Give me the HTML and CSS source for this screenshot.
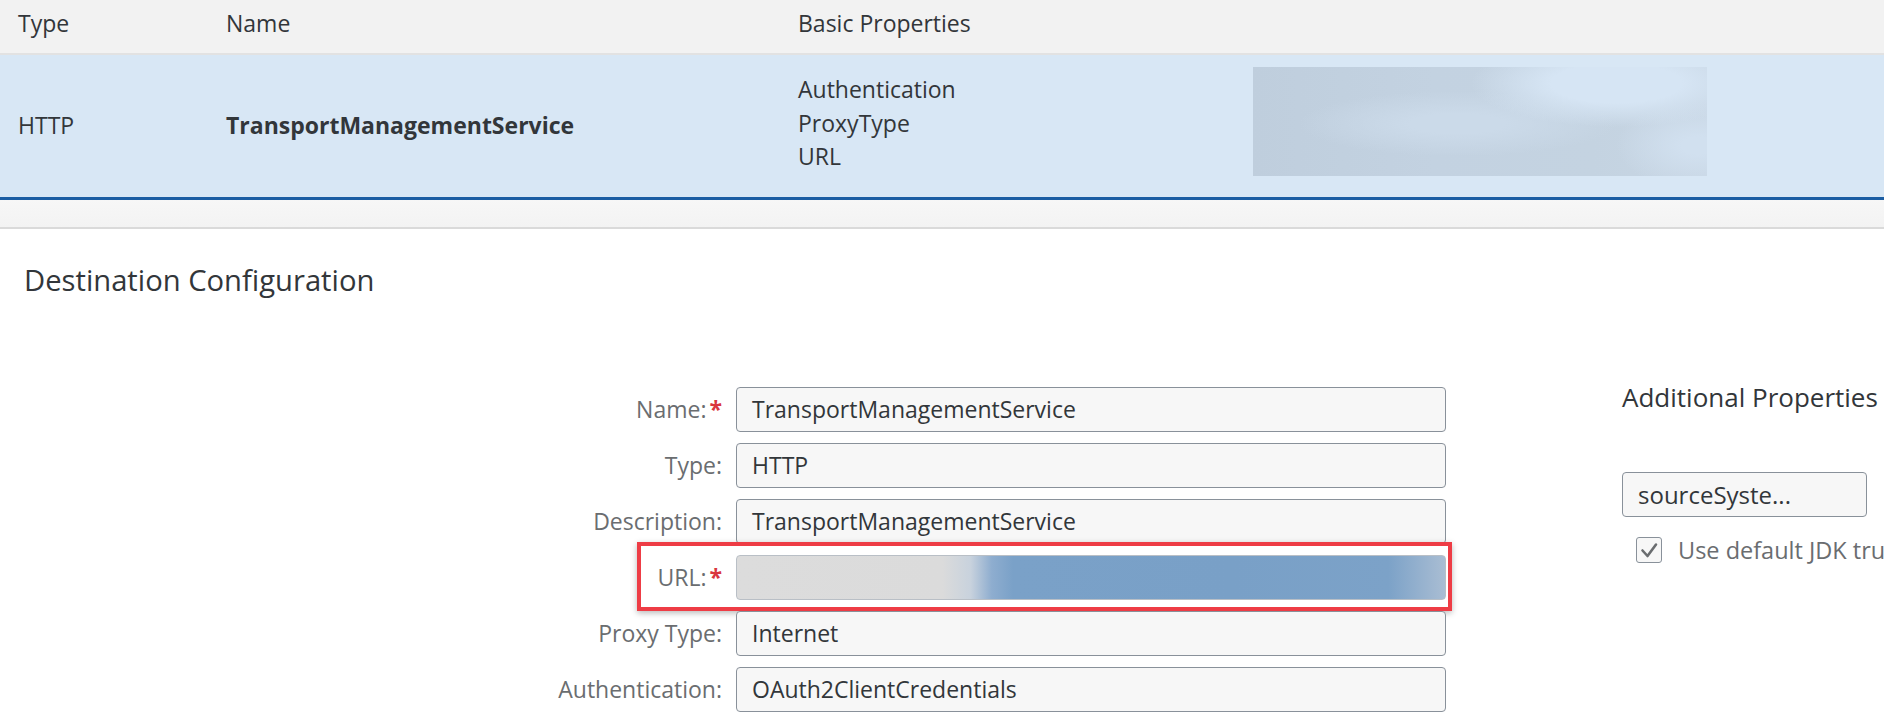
FILE: index.html
```html
<!DOCTYPE html>
<html lang="en">
<head>
<meta charset="utf-8">
<title>Destination Configuration</title>
<link rel="stylesheet" href="styles.css">
</head>
<body>
<div class="page">
  <div class="table">
    <div class="thead">
      <div class="cell">Type</div>
      <div class="cell">Name</div>
      <div class="cell">Basic Properties</div>
      <div class="cell"></div>
    </div>
    <div class="trow">
      <div class="cell">HTTP</div>
      <div class="cell bold">TransportManagementService</div>
      <div class="cell props">
        <div>Authentication</div>
        <div>ProxyType</div>
        <div>URL</div>
      </div>
      <div class="cell blurcell"><div class="blurbox"></div></div>
    </div>
    <div class="tfoot"></div>
  </div>

  <div class="section">
    <h2 class="title">Destination Configuration</h2>
    <div class="form">
      <div class="fields">
        <div class="field">
          <label class="label">Name:<span class="req">*</span></label>
          <div class="input">TransportManagementService</div>
        </div>
        <div class="field">
          <label class="label">Type:</label>
          <div class="input">HTTP</div>
        </div>
        <div class="field">
          <label class="label">Description:</label>
          <div class="input">TransportManagementService</div>
        </div>
        <div class="field field-url">
          <label class="label">URL:<span class="req">*</span></label>
          <div class="input input-blur"></div>
          <div class="highlight"></div>
        </div>
        <div class="field">
          <label class="label">Proxy Type:</label>
          <div class="input">Internet</div>
        </div>
        <div class="field">
          <label class="label">Authentication:</label>
          <div class="input">OAuth2ClientCredentials</div>
        </div>
      </div>
      <div class="additional">
        <h3 class="subtitle">Additional Properties</h3>
        <div class="input small">sourceSyste...</div>
        <div class="check-row">
          <span class="checkbox">
            <svg width="26" height="26" viewBox="0 0 26 26"><polyline points="6.5,13.5 11.5,19 20,7.5" fill="none" stroke="#6a6d70" stroke-width="2.6" stroke-linecap="round" stroke-linejoin="round"/></svg>
          </span>
          <span class="check-label">Use default JDK truststore</span>
        </div>
      </div>
    </div>
  </div>
</div>
</body>
</html>
```
FILE: styles.css
```css
html, body {
  margin: 0;
  padding: 0;
  overflow: hidden;
  background: #ffffff;
}

.page {
  width: 1884px;
  height: 726px;
  overflow: hidden;
  font-family: "Open Sans", "Liberation Sans", sans-serif;
  color: #32363a;
}

/* ---------- table ---------- */
.thead,
.trow {
  display: grid;
  grid-template-columns: 208px 572px 455px 1fr;
  padding-left: 18px;
  font-size: 23px;
}

.thead {
  background: #f2f2f2;
  border-bottom: 2px solid #e2e2e2;
  line-height: 32px;
  padding-top: 7px;
  height: 46px;
}

.trow {
  height: 142px;
  background: #d8e7f5;
  border-bottom: 3px solid #1b5da3;
  align-items: center;
  line-height: 33.8px;
}

.props {
  margin-bottom: 5px;
}

.bold {
  font-weight: 700;
}

.blurcell {
  align-self: start;
  margin-top: 12px;
}

.blurbox {
  width: 454px;
  height: 109px;
  background:
    radial-gradient(ellipse 32% 40% at 80% 15%, #d6e5f4 45%, rgba(214,229,244,0) 100%),
    radial-gradient(ellipse 35% 30% at 45% 52%, #cbdae9 30%, rgba(203,218,233,0) 100%),
    radial-gradient(ellipse 18% 40% at 98% 72%, #d1e0ef 20%, rgba(209,224,239,0) 100%),
    linear-gradient(90deg, #bfcedd 0%, #c3d2e1 40%, #c4d3e1 75%, #c8d6e4 100%);
}

.tfoot {
  height: 27px;
  background: linear-gradient(#f7f7f7, #f3f3f3);
  border-bottom: 2px solid #dadada;
}

/* ---------- section ---------- */
.section {
  padding-top: 32px;
}

.title {
  margin: 0 0 0 24px;
  font-size: 29.2px;
  font-weight: 400;
  line-height: 38px;
  color: #32363a;
}

.form {
  display: flex;
  align-items: flex-start;
  margin-top: 81px;
}

.fields {
  display: flex;
  flex-direction: column;
  gap: 11px;
  padding-top: 7px;
}

.field {
  display: flex;
  align-items: center;
  height: 45px;
  position: relative;
}

.label {
  width: 722px;
  margin-right: 14px;
  text-align: right;
  font-size: 23px;
  line-height: 45px;
  color: #6a6d70;
  white-space: nowrap;
}

.req {
  color: #d9363e;
  font-weight: 700;
  margin-left: 3px;
}

.input {
  box-sizing: border-box;
  width: 710px;
  height: 45px;
  border: 1px solid #89919a;
  border-radius: 4px;
  background: #f7f7f7;
  padding-left: 15px;
  font-size: 23px;
  line-height: 43px;
  color: #32363a;
  white-space: nowrap;
  overflow: hidden;
}

.input-blur {
  background: linear-gradient(90deg,
    #dcdcdc 0%, #dbdbdb 29%, #c8d2dd 33%, #8eadcf 36%, #7aa1c8 39%,
    #79a0c7 70%, #7ca2c8 92%, #a9bdd3 100%);
  border-color: #b9bfc6;
}

.highlight {
  position: absolute;
  left: 637px;
  top: -13px;
  width: 815px;
  height: 69px;
  box-sizing: border-box;
  border: 4px solid #ee3c45;
  box-shadow: 0 2px 6px rgba(0, 0, 0, 0.28);
  pointer-events: none;
}

/* ---------- additional properties ---------- */
.additional {
  margin-left: 176px;
  display: flex;
  flex-direction: column;
  align-items: flex-start;
}

.subtitle {
  margin: 0;
  font-size: 26px;
  font-weight: 400;
  line-height: 34px;
  color: #32363a;
  white-space: nowrap;
}

.input.small {
  width: 245px;
  margin-top: 58px;
  font-size: 24px;
}

.check-row {
  display: flex;
  align-items: center;
  margin-top: 20px;
  margin-left: 14px;
  height: 26px;
  white-space: nowrap;
}

.checkbox {
  display: block;
  flex: none;
  width: 26px;
  height: 26px;
  box-sizing: border-box;
  border: 1px solid #89919a;
  border-radius: 3px;
  background: #f7f7f7;
  position: relative;
}

.checkbox svg {
  position: absolute;
  left: -1px;
  top: -1px;
}

.check-label {
  margin-left: 16px;
  font-size: 23.5px;
  line-height: 26px;
  color: #6a6d70;
}
```
